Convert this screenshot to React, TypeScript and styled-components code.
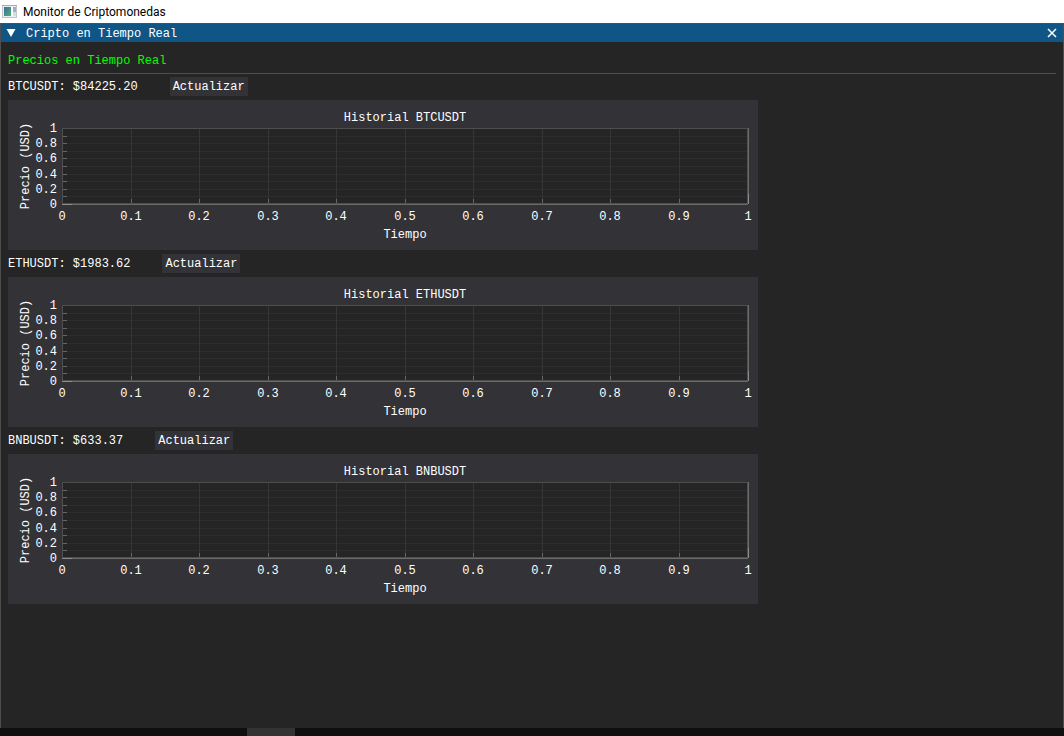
import React from "react";
import styled, { createGlobalStyle } from "styled-components";

const GlobalStyle = createGlobalStyle`
  * { box-sizing: border-box; }
  body {
    margin: 0;
    background: #252526;
  }
`;

const mono = `"Liberation Mono", monospace`;

const Page = styled.div`
  display: flex;
  flex-direction: column;
  min-height: 100vh;
`;

const SystemBar = styled.header`
  display: flex;
  align-items: center;
  gap: 5px;
  height: 23px;
  padding: 0 2px;
  background: #ffffff;
  color: #000000;
  font: 12px/22px Roboto, sans-serif;
`;

const Panel = styled.main`
  flex: 1;
  display: flex;
  flex-direction: column;
  border: 1px solid #4e4e4f;
  border-bottom: 0;
  color: #ffffff;
  font: 12px/19px ${mono};
`;

const PanelBar = styled.div`
  display: flex;
  align-items: center;
  height: 18px;
  padding: 0 5px;
  background: #0f5687;
`;

const PanelTitle = styled.h1`
  flex: 1;
  margin: 0;
  padding: 2px 0 0 4px;
  font: inherit;
`;

const IconButton = styled.button`
  display: flex;
  align-items: center;
  justify-content: center;
  width: 12px;
  height: 18px;
  padding: 0;
  border: 0;
  background: none;
`;

const BarButton = styled(IconButton)`
  width: 16px;
  justify-content: flex-start;
`;

const Body = styled.div`
  display: flex;
  flex-direction: column;
  gap: 3px;
  padding: 10px 7px;
`;

const Heading = styled.h2`
  margin: 0;
  padding-bottom: 2px;
  border-bottom: 1px solid #4e4e4f;
  color: #00ff00;
  font: inherit;
`;

const CoinList = styled.div`
  display: flex;
  flex-direction: column;
  gap: 4px;
`;

const PriceRow = styled.div`
  display: flex;
  align-items: center;
  gap: 32px;
  height: 19px;
`;

const Price = styled.span`
  padding-top: 2px;
`;

const UpdateButton = styled.button`
  height: 19px;
  padding: 2px 3px 0;
  border: 0;
  background: #333337;
  color: inherit;
  font: inherit;
  line-height: 17px;
`;

const Plot = styled.svg`
  display: block;
  width: 100%;
  max-width: 750px;
  background: #333337;
  fill: #ffffff;
  font: 12px ${mono};
`;

const Taskbar = styled.footer`
  height: 8px;
  padding-left: 247px;
  background: #0f0f0f;
`;

const TaskItem = styled.div`
  width: 48px;
  height: 8px;
  background: #333333;
`;

const coins = [
  { symbol: "BTCUSDT", price: "84225.20" },
  { symbol: "ETHUSDT", price: "1983.62" },
  { symbol: "BNBUSDT", price: "633.37" },
];

const xTicks = [123, 191, 260, 328, 397, 465, 534, 602, 671];
const yTicks = [36, 43, 51, 58, 66, 74, 81, 89, 96];
const xLabels: [string, number][] = [
  ["0", 54],
  ...xTicks.map((x, i): [string, number] => [`0.${i + 1}`, x]),
  ["1", 740],
];
const yLabels: [string, number][] = [
  ["1", 28], ["0.8", 43], ["0.6", 58], ["0.4", 74], ["0.2", 89], ["0", 104],
];

function PriceChart({ symbol }: { symbol: string }) {
  return (
    <Plot viewBox="0 0 750 150" role="img" aria-label={`Historial ${symbol}`}>
      <text x={397} y={21} textAnchor="middle">Historial {symbol}</text>
      <g shapeRendering="crispEdges">
        <rect x={54} y={28} width={687} height={77} fill="#252526" />
        {yTicks.map((y) => (
          <g key={y}>
            <rect x={55} y={y} width={684} height={1} fill="#2d2d2e" />
            <rect x={55} y={y} width={4} height={1} fill="#666666" />
          </g>
        ))}
        {xTicks.map((x) => (
          <g key={x}>
            <rect x={x} y={29} width={1} height={74} fill="#363637" />
            <rect x={x} y={99} width={1} height={4} fill="#666666" />
          </g>
        ))}
        <rect x={54} y={28} width={687} height={1} fill="#4e4e4f" />
        <rect x={54} y={28} width={1} height={76} fill="#4e4e4f" />
        <rect x={54} y={103} width={686} height={1} fill="#4e4e4f" />
        <rect x={739} y={28} width={1} height={76} fill="#4e4e4f" />
        <rect x={54} y={104} width={686} height={1} fill="#6a6a6b" />
        <rect x={740} y={28} width={1} height={76} fill="#6a6a6b" />
        <rect x={54} y={104} width={10} height={1} fill="#8c8c8d" />
        <rect x={740} y={94} width={1} height={10} fill="#8c8c8d" />
      </g>
      {yLabels.map(([label, y]) => (
        <text key={label} x={49} y={y + 4} textAnchor="end">{label}</text>
      ))}
      {xLabels.map(([label, x]) => (
        <text key={label} x={x} y={120} textAnchor="middle">{label}</text>
      ))}
      <text x={397} y={138} textAnchor="middle">Tiempo</text>
      <text transform="translate(21 66) rotate(-90)" textAnchor="middle">Precio (USD)</text>
    </Plot>
  );
}

function AppIcon() {
  return (
    <svg width="16" height="16" viewBox="0 0 16 16" aria-hidden="true">
      <defs>
        <linearGradient id="screen" x1="0" y1="0" x2="1" y2="1">
          <stop offset="0" stopColor="#3a6ea0" />
          <stop offset="1" stopColor="#4fae78" />
        </linearGradient>
      </defs>
      <rect x="0.5" y="1.5" width="14" height="12" fill="#ececee" stroke="#c2c4c8" />
      <rect x="0" y="1" width="15" height="1" fill="#a9acb2" />
      <rect x="2" y="3" width="7" height="9" fill="url(#screen)" />
      <rect x="9" y="3" width="2" height="9" fill="#ffffff" />
      <rect x="11" y="3" width="3" height="5" fill="#8fb4cc" />
      <rect x="11" y="8" width="3" height="4" fill="#d9dcde" />
    </svg>
  );
}

export default function App() {
  return (
    <Page>
      <GlobalStyle />
      <SystemBar>
        <AppIcon />
        <span>Monitor de Criptomonedas</span>
      </SystemBar>
      <Panel>
        <PanelBar>
          <BarButton aria-label="Contraer">
            <svg width="10" height="8" viewBox="0 0 10 8">
              <path d="M0.5 0H9.5L5 8Z" fill="#fff" />
            </svg>
          </BarButton>
          <PanelTitle>Cripto en Tiempo Real</PanelTitle>
          <IconButton aria-label="Cerrar">
            <svg width="10" height="10" viewBox="0 0 10 10">
              <path d="M1 1L9 9M9 1L1 9" stroke="#fff" strokeWidth="1.5" />
            </svg>
          </IconButton>
        </PanelBar>
        <Body>
          <Heading>Precios en Tiempo Real</Heading>
          <CoinList>
            {coins.map(({ symbol, price }) => (
              <React.Fragment key={symbol}>
                <PriceRow>
                  <Price>{symbol}: ${price}</Price>
                  <UpdateButton>Actualizar</UpdateButton>
                </PriceRow>
                <PriceChart symbol={symbol} />
              </React.Fragment>
            ))}
          </CoinList>
        </Body>
      </Panel>
      <Taskbar>
        <TaskItem />
      </Taskbar>
    </Page>
  );
}
